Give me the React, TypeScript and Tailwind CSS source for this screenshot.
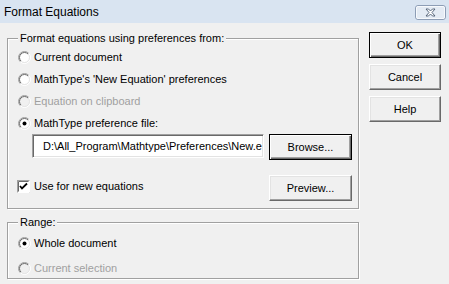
import React from "react";

function Radio({ checked = false, disabled = false }: { checked?: boolean; disabled?: boolean }) {
  const id = React.useId().replace(/:/g, "");
  return (
    <svg width="13" height="13" viewBox="0 0 13 13" className="shrink-0">
      <defs>
        <linearGradient id={`o${id}`} x1="0" y1="0" x2="1" y2="1">
          <stop offset="0.45" stopColor="#a0a0a0" />
          <stop offset="0.55" stopColor="#ffffff" />
        </linearGradient>
        <linearGradient id={`i${id}`} x1="0" y1="0" x2="1" y2="1">
          <stop offset="0.45" stopColor="#696969" />
          <stop offset="0.55" stopColor="#e3e3e3" />
        </linearGradient>
      </defs>
      <circle cx="6.5" cy="6.5" r="6" fill="none" stroke={`url(#o${id})`} strokeWidth="1" />
      <circle cx="6.5" cy="6.5" r="5" fill={disabled ? "#f0f0f0" : "#ffffff"} stroke={`url(#i${id})`} strokeWidth="1" />
      {checked && <circle cx="6.5" cy="6.5" r="2" fill="#000" />}
    </svg>
  );
}

function RadioRow({ label, checked, disabled, h = "h-[22px]" }: { label: string; checked?: boolean; disabled?: boolean; h?: string }) {
  return (
    <div className={`flex items-center gap-[3px] ${h}`}>
      <Radio checked={checked} disabled={disabled} />
      <span className={disabled ? "text-[#a0a0a0]" : "text-black"}>{label}</span>
    </div>
  );
}

function Button({ label, isDefault = false, w = "w-[72px]" }: { label: string; isDefault?: boolean; w?: string }) {
  return (
    <div
      className={`${w} h-[26px] flex items-center justify-center bg-[#f0f0f0] text-black ${
        isDefault
          ? "border border-black shadow-[inset_1px_1px_0_#fff,inset_-1px_-1px_0_#696969,inset_-2px_-2px_0_#a0a0a0]"
          : "border border-t-white border-l-white border-r-[#696969] border-b-[#696969] shadow-[inset_-1px_-1px_0_#a0a0a0,inset_1px_1px_0_#e3e3e3]"
      }`}
    >
      {label}
    </div>
  );
}

function Group({ title, className, children }: { title: string; className: string; children: React.ReactNode }) {
  return (
    <div className={`relative border border-[#a0a0a0] shadow-[inset_1px_1px_0_#fff,1px_1px_0_#fff] ${className}`}>
      <span className="absolute -top-[8px] left-[10px] bg-[#f0f0f0] px-[2px] leading-[14px]">{title}</span>
      {children}
    </div>
  );
}

export default function App() {
  return (
    <div className="w-[449px] h-[284px] bg-[#f0f0f0] overflow-hidden font-['Liberation_Sans',Arial,sans-serif] text-[11px] text-black">
      {/* Title bar */}
      <div className="h-[23px] bg-[#d9e4f1] flex items-center justify-between pl-[4px] pr-[3px]">
        <span className="text-[12px] text-black">Format Equations</span>
        <svg width="31" height="15" viewBox="0 0 31 15" className="mt-[1px]">
          <rect x="0.5" y="0.5" width="30" height="14" rx="2.5" fill="#e4ebf4" stroke="#8d9db5" />
          <rect x="1.5" y="1.5" width="28" height="12" rx="1.5" fill="none" stroke="#f7f9fc" />
          <path
            d="M11 4 L13.5 4 L15.5 6 L17.5 4 L20 4 L17 7.5 L20 11 L17.5 11 L15.5 9 L13.5 11 L11 11 L14 7.5 Z"
            fill="#ffffff"
            stroke="#4b5a70"
            strokeWidth="0.9"
            strokeLinejoin="round"
          />
        </svg>
      </div>

      {/* Body */}
      <div className="flex">
        <div className="ml-[7px] pt-[15px] flex flex-col w-[352px]">
          <Group title="Format equations using preferences from:" className="h-[171px] pt-[7px] pl-[10px]">
            <RadioRow label="Current document" />
            <RadioRow label="MathType's 'New Equation' preferences" />
            <RadioRow label="Equation on clipboard" disabled />
            <RadioRow label="MathType preference file:" checked />
            <div className="flex items-start ml-[14px] gap-[5px]">
              <div className="w-[232px] h-[24px] bg-white border border-t-[#a0a0a0] border-l-[#a0a0a0] border-r-white border-b-white shadow-[inset_1px_1px_0_#696969,inset_-1px_-1px_0_#e3e3e3] flex items-center pl-[10px] overflow-hidden whitespace-nowrap">
                D:\All_Program\Mathtype\Preferences\New.e
              </div>
              <Button label="Browse..." isDefault w="w-[83px]" />
            </div>
            <div className="flex items-center justify-between mt-[15px] pr-[6px]">
              <div className="flex items-center gap-[4px] -mt-[3px] -ml-[1px]">
                <svg width="13" height="13" viewBox="0 0 13 13" className="shrink-0">
                  <rect x="0.5" y="0.5" width="12" height="12" fill="#fff" stroke="#a0a0a0" />
                  <path d="M0.5 12.5 H12.5 V0.5" fill="none" stroke="#ffffff" />
                  <path d="M1.5 11.5 V1.5 H11.5" fill="none" stroke="#696969" />
                  <polyline points="3,6 5,8.5 10,3.5" fill="none" stroke="#000" strokeWidth="1.8" />
                </svg>
                <span>Use for new equations</span>
              </div>
              <Button label="Preview..." w="w-[83px]" />
            </div>
          </Group>

          <Group title="Range:" className="mt-[13px] h-[57px] pt-[8px] pl-[10px]">
            <RadioRow label="Whole document" checked h="h-[25px]" />
            <RadioRow label="Current selection" disabled h="h-[25px]" />
          </Group>
        </div>

        <div className="ml-[10px] pt-[9px] flex flex-col gap-[6px]">
          <Button label="OK" isDefault />
          <Button label="Cancel" />
          <Button label="Help" />
        </div>
      </div>
    </div>
  );
}
